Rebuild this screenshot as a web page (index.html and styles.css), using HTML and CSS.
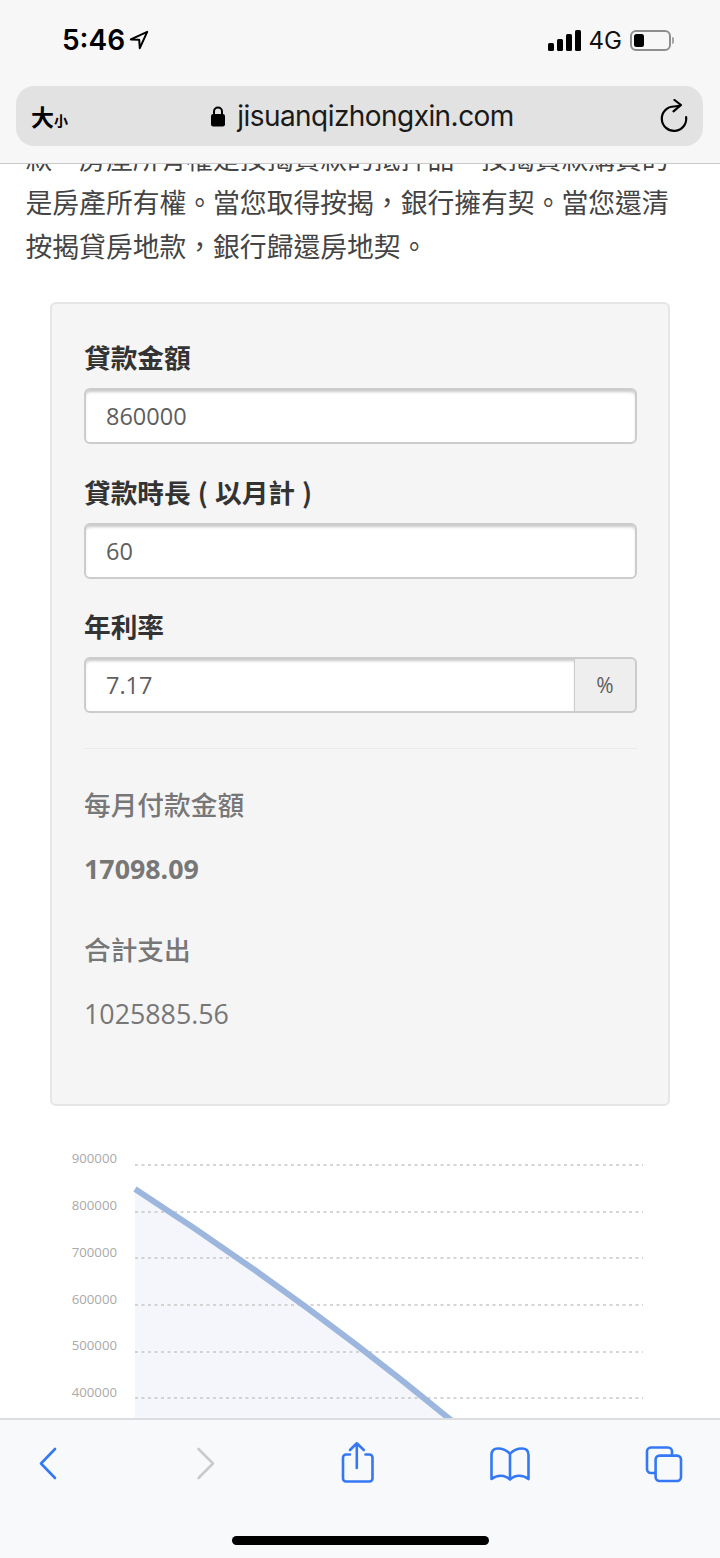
FILE: index.html
```html
<!DOCTYPE html>
<html lang="zh-Hant">
  <head>
    <meta charset="UTF-8">
    <meta name="viewport" content="width=device-width, initial-scale=1.0">
    <title>貸款計算器</title>
    <link rel="stylesheet" href="styles.css">
  </head>
  <body>
    <div class="phone">
      <header class="top-bar">
        <div class="status-bar">
          <div class="status-left">
            <span class="time">5:46</span>
            <svg class="location" viewBox="0 0 20 20" width="20" height="20">
              <path d="M18.2 1.8 1.8 9.4l8.4.4.6 8.4z" fill="none" stroke="#000" stroke-width="2" stroke-linejoin="round"/>
            </svg>
          </div>
          <div class="status-right">
            <div class="signal">
              <span class="bar bar-1"></span>
              <span class="bar bar-2"></span>
              <span class="bar bar-3"></span>
              <span class="bar bar-4"></span>
            </div>
            <span class="network">4G</span>
            <div class="battery"><span class="battery-level"></span></div>
            <span class="battery-nub"></span>
          </div>
        </div>
        <div class="address-bar">
          <div class="text-size"><span class="big">大</span><span class="small">小</span></div>
          <div class="url">
            <svg class="lock" viewBox="0 0 16 22" width="16" height="22">
              <path d="M4 10V6.5a4 4 0 0 1 8 0V10" fill="none" stroke="#000" stroke-width="2"/>
              <rect x="1" y="9" width="14" height="12.5" rx="2.2" fill="#000"/>
            </svg>
            <span>jisuanqizhongxin.com</span>
          </div>
          <svg class="reload" viewBox="0 0 28 34" width="28" height="34">
            <path d="M20 6.500C18 7 16 7.500 14 7.500A12.200 12.200 0 1 0 26.100 18" fill="none" stroke="#000" stroke-width="2.200" stroke-linecap="round"/>
            <path d="M14.500 1 21 6l-7.500 6.300" fill="none" stroke="#000" stroke-width="2.200" stroke-linecap="round" stroke-linejoin="round"/>
          </svg>
        </div>
      </header>

      <main class="scroller">
        <p class="intro">款，房產所有權是按揭貸款的抵押品。按揭貸款購買的是房產所有權。當您取得按揭，銀行擁有契。當您還清按揭貸房地款，銀行歸還房地契。</p>

        <section class="calc-card">
          <div class="form-group">
            <label for="amount">貸款金額</label>
            <input id="amount" class="field" type="text" value="860000">
          </div>
          <div class="form-group">
            <label for="months">貸款時長 ( 以月計 )</label>
            <input id="months" class="field" type="text" value="60">
          </div>
          <div class="form-group">
            <label for="rate">年利率</label>
            <div class="input-group">
              <input id="rate" class="field" type="text" value="7.17">
              <span class="addon">%</span>
            </div>
          </div>
          <hr class="divider">
          <div class="result-label">每月付款金額</div>
          <div class="result-value strong">17098.09</div>
          <div class="result-label">合計支出</div>
          <div class="result-value">1025885.56</div>
        </section>

        <svg class="chart" viewBox="0 0 720 340" width="720" height="340">
          <path class="area" d="M135 49C240 117 350 195 470 296L470 340 135 340z"/>
          <g class="grid">
            <line x1="135" y1="25" x2="643" y2="25"/>
            <line x1="135" y1="72" x2="643" y2="72"/>
            <line x1="135" y1="118" x2="643" y2="118"/>
            <line x1="135" y1="165" x2="643" y2="165"/>
            <line x1="135" y1="212" x2="643" y2="212"/>
            <line x1="135" y1="258" x2="643" y2="258"/>
          </g>
          <g class="ticks">
            <text x="117" y="23">900000</text>
            <text x="117" y="70">800000</text>
            <text x="117" y="117">700000</text>
            <text x="117" y="164">600000</text>
            <text x="117" y="210">500000</text>
            <text x="117" y="257">400000</text>
          </g>
          <path class="curve" d="M135 49C240 117 350 195 470 296"/>
        </svg>
      </main>

      <footer class="bottom-bar">
        <nav class="toolbar">
          <svg class="tools" viewBox="0 0 720 60" width="720" height="60">
            <g fill="none" stroke="#3478f6" stroke-width="2.600" stroke-linecap="round" stroke-linejoin="round">
              <path d="M55 17 41 31.500 55 46"/>
              <path stroke="#cbcbcb" d="M198.500 17 213 31.500 198.500 46"/>
              <path d="M350 22.500h-4a3 3 0 0 0-3 3v21a3 3 0 0 0 3 3h23.500a3 3 0 0 0 3-3v-21a3 3 0 0 0-3-3h-4"/>
              <path d="M356.800 36V11.500M350 18l6.800-6.700 7 6.700"/>
              <path d="M510 22C507 18.500 503 16.500 498 16.500 494 16.500 491.500 18.500 491.500 23V47C497 42.500 505 42.500 510 47.500 515 42.500 523 42.500 528.500 47V23C528.500 18.500 526 16.500 522 16.500 517 16.500 513 18.500 510 22ZM510 22V47.500"/>
              <path d="M672 22v-2.500a4 4 0 0 0-4-4h-17a4 4 0 0 0-4 4v17.500a4 4 0 0 0 4 4h3.500"/>
              <rect x="655.600" y="23.600" width="25.400" height="25.400" rx="4"/>
            </g>
          </svg>
        </nav>
        <div class="home-indicator"></div>
      </footer>
    </div>
  </body>
</html>
```

FILE: styles.css
```css
* {
  box-sizing: border-box;
}

body {
  margin: 0;
  background: #fff;
  font-family: "Open Sans", "Noto Sans CJK TC", sans-serif;
}

.phone {
  width: 720px;
  height: 1558px;
  display: flex;
  flex-direction: column;
  overflow: hidden;
}

/* top bar */
.top-bar {
  flex: none;
  height: 164px;
  background: #f7f7f7;
  border-bottom: 1px solid #c9c9c9;
}

.status-bar {
  height: 86px;
  padding: 0 46px 6px 62px;
  display: flex;
  justify-content: space-between;
  align-items: center;
}

.status-left,
.status-right {
  display: flex;
  align-items: center;
}

.time {
  font-family: Inter, sans-serif;
  font-weight: 600;
  font-size: 28px;
  color: #000;
}

.location {
  margin-left: 4px;
}

.signal {
  display: flex;
  align-items: flex-end;
  gap: 3px;
  height: 22px;
}

.bar {
  width: 6px;
  background: #000;
  border-radius: 1.5px;
}

.bar-1 { height: 8px; }
.bar-2 { height: 12px; }
.bar-3 { height: 17px; }
.bar-4 { height: 21px; }

.network {
  margin-left: 8px;
  font-family: Inter, sans-serif;
  font-size: 24px;
  color: #111;
}

.battery {
  margin-left: 8px;
  width: 41px;
  height: 21px;
  border: 2px solid #8e8e8e;
  border-radius: 6px;
  padding: 2px;
}

.battery-level {
  display: block;
  width: 10px;
  height: 100%;
  background: #000;
  border-radius: 2.5px;
}

.battery-nub {
  margin-left: 1px;
  width: 2px;
  height: 7px;
  background: #a5a5a5;
  border-radius: 0 2px 2px 0;
}

.address-bar {
  margin: 0 17px 0 16px;
  height: 60px;
  background: #e2e2e2;
  border-radius: 18px;
  padding: 0 15px;
  display: flex;
  align-items: center;
  justify-content: space-between;
}

.text-size {
  display: flex;
  align-items: baseline;
  font-family: "Noto Sans CJK TC", sans-serif;
  font-weight: 700;
  color: #000;
}

.big {
  font-size: 23px;
}

.small {
  font-size: 14px;
}

.url {
  display: flex;
  align-items: center;
  gap: 11px;
  font-family: Inter, sans-serif;
  font-size: 28px;
  letter-spacing: -0.55px;
  color: #1a1a1a;
  margin-right: 4px;
}

/* page content */
.scroller {
  flex: 1;
  min-height: 0;
  overflow: hidden;
}

.intro {
  margin: -28px 0 34px;
  padding: 0 25px 0 25.5px;
  font-family: "Noto Sans CJK TC", sans-serif;
  font-size: 26.8px;
  line-height: 44px;
  color: #444;
}

.calc-card {
  margin: 0 50px;
  padding: 32px 31px 68px 32px;
  background: #f5f5f5;
  border: 2px solid #e6e6e6;
  border-radius: 6px;
}

.form-group {
  margin-bottom: 26.5px;
}

.form-group label {
  display: block;
  margin-bottom: 11px;
  font-family: "Noto Sans CJK TC", sans-serif;
  font-weight: 700;
  font-size: 26.7px;
  line-height: 41px;
  word-spacing: 1px;
  color: #333;
}

.field {
  display: block;
  width: 100%;
  height: 56px;
  padding: 0 20px;
  background: #fff;
  border: 2px solid #ccc;
  border-radius: 6px;
  box-shadow: inset 0 3px 3px -1px rgba(0, 0, 0, 0.22);
  font-family: "Open Sans", sans-serif;
  font-size: 23.5px;
  color: #5e5e5e;
  outline: none;
}

.input-group {
  display: flex;
}

.input-group .field {
  flex: 1;
  min-width: 0;
  border-radius: 6px 0 0 6px;
  border-right-width: 1px;
}

.addon {
  flex: none;
  width: 62px;
  display: flex;
  align-items: center;
  justify-content: center;
  background: #eee;
  border: 2px solid #ccc;
  border-left: 0;
  border-radius: 0 6px 6px 0;
  font-size: 21px;
  color: #5e5e5e;
}

.divider {
  margin: 35px 0 34px;
  border: 0;
  border-top: 1px solid #eaeaea;
}

.result-label {
  font-family: "Noto Sans CJK TC", sans-serif;
  font-weight: 500;
  font-size: 26.7px;
  line-height: 42px;
  margin-bottom: 23px;
  color: #777;
}

.result-value {
  font-size: 26.8px;
  line-height: 42px;
  margin-bottom: 38px;
  color: #777;
}

.result-value.strong {
  font-weight: 700;
}

.result-value:last-child {
  margin-bottom: 1px;
}

/* chart */
.chart {
  display: block;
  margin-top: 34px;
}

.area {
  fill: #f4f6fb;
}

.grid line {
  stroke: #c8c8c8;
  stroke-width: 1.5;
  stroke-dasharray: 3 3.5;
}

.ticks text {
  font-family: "Open Sans", sans-serif;
  font-size: 13.2px;
  fill: #a9a9a9;
  text-anchor: end;
}

.curve {
  fill: none;
  stroke: #9db6dd;
  stroke-width: 6;
}

/* bottom bar */
.bottom-bar {
  flex: none;
  height: 140px;
  background: #f8f9fb;
  border-top: 2px solid #dcdde0;
  position: relative;
}

.toolbar {
  height: 60px;
  padding-top: 12px;
}

.tools {
  display: block;
}

.home-indicator {
  position: absolute;
  left: 232px;
  top: 116px;
  width: 257px;
  height: 9px;
  background: #000;
  border-radius: 5px;
}
```
